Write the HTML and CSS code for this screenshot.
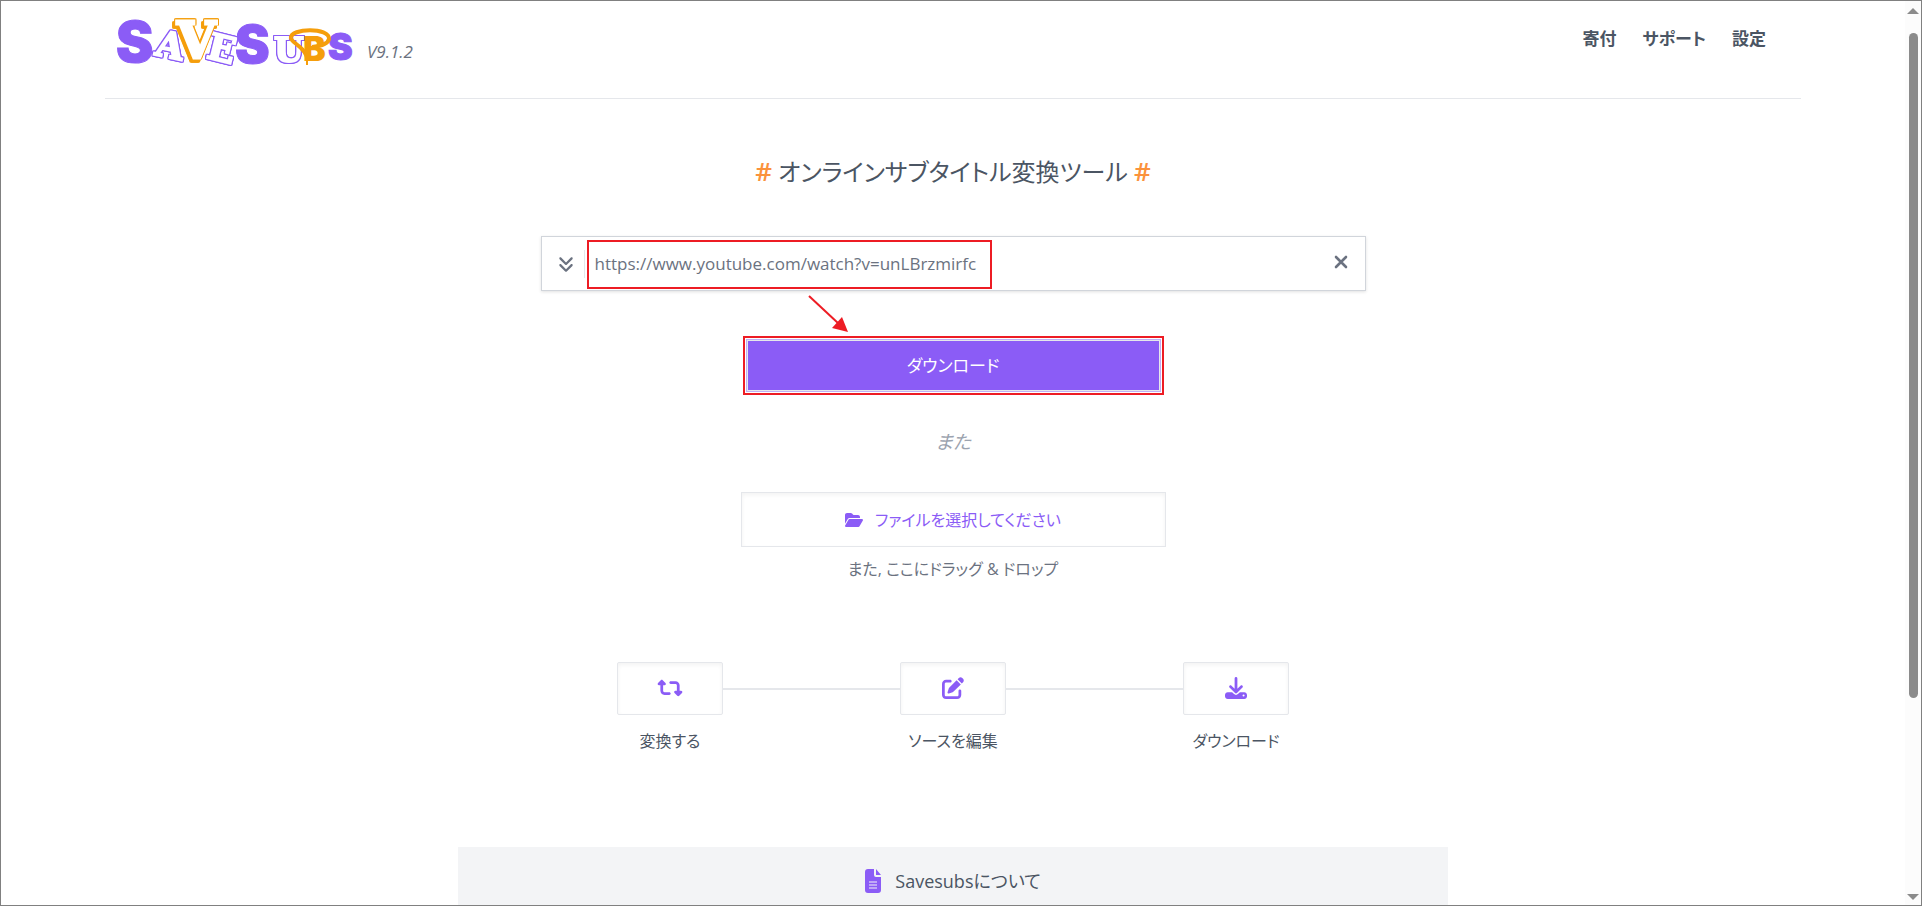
FILE: index.html
```
<!DOCTYPE html>
<html lang="ja">
<head>
<meta charset="utf-8">
<meta name="viewport" content="width=device-width, initial-scale=1">
<title>SaveSubs</title>
<link rel="stylesheet" href="styles.css">
</head>
<body>
<div class="page">
	<header class="header">
		<a href="#" class="logo" aria-label="SaveSubs">
			<svg width="240" height="80" viewBox="0 -16 240 80">
				<g class="logo-line">
					<text x="40" y="41" font-size="36" transform="rotate(12 55 30)">A</text>
					<text x="92" y="44" font-size="36" transform="rotate(14 105 32)">E</text>
					<text x="158" y="45" font-size="34">U</text>
				</g>
				<g class="logo-solid">
					<text x="0" y="45" font-size="56">S</text>
					<text x="119" y="46" font-size="52">S</text>
					<text x="212" y="43" font-size="37">S</text>
				</g>
				<g class="logo-v">
					<text x="61" y="41" font-size="50">V</text>
				</g>
				<g class="logo-b">
					<text x="187" y="44" font-size="34">B</text>
					<path class="logo-swash" d="M192 43C188 28 176 27 175 21C174 11 214 10 213 22C212 27 206 29 196 30"/>
					<path class="logo-stem" d="M191 20V48"/>
				</g>
			</svg>
		</a>
		<span class="version">V9.1.2</span>
		<nav class="nav">
			<a href="#">寄付</a>
			<a href="#">サポート</a>
			<a href="#">設定</a>
		</nav>
	</header>

	<main class="main">
		<h1 class="title"><b>#</b> オンラインサブタイトル変換ツール <b>#</b></h1>

		<form class="form">
			<div class="url-box">
				<button type="button" class="url-toggle" aria-label="サイト一覧">
					<svg width="16" height="18" viewBox="0 0 448 512"><path d="M246.600 470.600c-12.500 12.500-32.800 12.500-45.300 0l-160-160c-12.500-12.500-12.500-32.800 0-45.300s32.800-12.500 45.300 0L224 402.700 361.400 265.400c12.500-12.500 32.800-12.500 45.300 0s12.500 32.800 0 45.300l-160 160zm160-352l-160 160c-12.500 12.500-32.800 12.500-45.300 0l-160-160c-12.500-12.500-12.500-32.800 0-45.300s32.800-12.500 45.300 0L224 210.700 361.400 73.400c12.500-12.500 32.800-12.500 45.300 0s12.500 32.800 0 45.300z"/></svg>
				</button>
				<input type="text" class="url-input" aria-label="URL" value="https://www.youtube.com/watch?v=unLBrzmirfc">
				<button type="button" class="url-clear" aria-label="クリア">
					<svg width="14" height="14" viewBox="0 0 14 14"><path d="M2 2L12 12M12 2L2 12"/></svg>
				</button>
				<span class="mark"></span>
				<svg class="arrow" width="44" height="42" viewBox="0 0 44 42"><path class="arrow-line" d="M2 2L32 30"/><path d="M41 38L25 34L35 23Z"/></svg>
			</div>
			<button type="button" class="download">ダウンロード</button>
			<p class="or">また</p>
			<button type="button" class="choose">
				<svg width="18" height="16" viewBox="0 0 576 512"><path d="M88.700 223.800L0 375.800V96C0 60.700 28.700 32 64 32H181.500c17 0 33.300 6.700 45.300 18.700l26.500 26.500c12 12 28.300 18.700 45.300 18.700H416c35.300 0 64 28.700 64 64v32H144c-22.800 0-43.800 12.100-55.300 31.800zm27.600 16.100C122.100 230 132.600 224 144 224H544c11.500 0 22 6.100 27.700 16.100s5.700 22.200-.1 32.100l-112 192C453.900 474 443.400 480 432 480H32c-11.500 0-22-6.100-27.700-16.100s-5.700-22.200 .1-32.100l112-192z"/></svg>
				ファイルを選択してください
			</button>
			<p class="drop">また, ここにドラッグ &amp; ドロップ</p>
		</form>

		<ul class="steps">
			<li>
				<span class="step-icon"><svg width="25" height="22" viewBox="0 0 576 512"><path d="M272 416c17.700 0 32-14.300 32-32s-14.300-32-32-32H160c-17.700 0-32-14.300-32-32V192h32c12.900 0 24.600-7.800 29.600-19.800s2.200-25.700-6.900-34.900l-64-64c-12.500-12.500-32.800-12.500-45.300 0l-64 64c-9.200 9.200-11.900 22.900-6.900 34.900s16.600 19.800 29.600 19.800l32 0 0 128c0 53 43 96 96 96H272zM304 96c-17.700 0-32 14.300-32 32s14.300 32 32 32l112 0c17.700 0 32 14.300 32 32l0 128H416c-12.900 0-24.600 7.800-29.600 19.800s-2.200 25.700 6.900 34.900l64 64c12.500 12.500 32.800 12.500 45.300 0l64-64c9.200-9.200 11.900-22.900 6.900-34.900s-16.600-19.800-29.600-19.800l-32 0V192c0-53-43-96-96-96L304 96z"/></svg></span>
				変換する
			</li>
			<li>
				<span class="step-icon"><svg width="22" height="22" viewBox="0 0 512 512"><path d="M471.600 21.700c-21.900-21.900-57.300-21.900-79.200 0L362.300 51.700l97.900 97.900 30.100-30.100c21.900-21.900 21.900-57.300 0-79.200L471.600 21.700zm-299.200 220c-6.100 6.100-10.800 13.600-13.500 21.900l-29.600 88.800c-2.900 8.600-.6 18.100 5.800 24.600s15.900 8.700 24.600 5.800l88.800-29.600c8.200-2.700 15.700-7.400 21.900-13.500L437.700 172.300 339.700 74.300 172.400 241.700zM96 64C43 64 0 107 0 160V416c0 53 43 96 96 96H352c53 0 96-43 96-96V320c0-17.700-14.300-32-32-32s-32 14.300-32 32v96c0 17.700-14.300 32-32 32H96c-17.700 0-32-14.300-32-32V160c0-17.700 14.300-32 32-32h96c17.700 0 32-14.300 32-32s-14.300-32-32-32H96z"/></svg></span>
				ソースを編集
			</li>
			<li>
				<span class="step-icon"><svg width="22" height="22" viewBox="0 0 512 512"><path d="M288 32c0-17.700-14.300-32-32-32s-32 14.300-32 32V274.700l-73.400-73.400c-12.500-12.500-32.800-12.500-45.300 0s-12.500 32.800 0 45.300l128 128c12.500 12.500 32.800 12.500 45.300 0l128-128c12.500-12.500 12.500-32.800 0-45.300s-32.800-12.500-45.300 0L288 274.700V32zM64 352c-35.300 0-64 28.700-64 64v32c0 35.300 28.700 64 64 64H448c35.300 0 64-28.700 64-64V416c0-35.300-28.700-64-64-64H346.500l-45.300 45.300c-25 25-65.500 25-90.500 0L165.500 352H64zm368 56a24 24 0 1 1 0 48 24 24 0 1 1 0-48z"/></svg></span>
				ダウンロード
			</li>
		</ul>

		<section class="about">
			<h2>
				<svg width="16" height="24" viewBox="0 0 16 24"><path d="M3 0H9V6Q9 8 11 8H16V21Q16 24 13 24H3Q0 24 0 21V3Q0 0 3 0ZM11 0L16 6H11Z"/><path class="doc-lines" d="M4 13H12M4 16H12M4 19H12"/></svg>
				Savesubsについて
			</h2>
		</section>
	</main>
</div>

<div class="scrollbar">
	<svg width="12" height="6" viewBox="0 0 12 6"><path d="M0 6L6 0L12 6Z"/></svg>
	<div class="track"><div class="thumb"></div></div>
	<svg width="12" height="6" viewBox="0 0 12 6"><path d="M0 0L6 6L12 0Z"/></svg>
</div>
</body>
</html>
```
FILE: styles.css
```
* {
	box-sizing: border-box;
}

body {
	margin: 0;
	height: 100vh;
	display: flex;
	overflow: hidden;
	border: 1px solid #808080;
	background: #fff;
	color: #4b5563;
	font: 16px/24px "Open Sans", "Noto Sans CJK JP", sans-serif;
	font-feature-settings: "palt";
}

h1, h2, p, ul {
	margin: 0;
	padding: 0;
}

button, input {
	margin: 0;
	padding: 0;
	border: 0;
	background: none;
	color: inherit;
	font: inherit;
	font-feature-settings: inherit;
}

svg {
	display: block;
	fill: currentColor;
}

.page {
	flex: 1;
	height: 100%;
	overflow: hidden;
	padding: 0 104px;
}

/* header */
.header {
	display: flex;
	align-items: flex-start;
	height: 98px;
	padding: 0 35px 0 11px;
	border-bottom: 1px solid #e5e7eb;
}

.logo svg {
	overflow: visible;
}

.logo text {
	font-family: Inter, sans-serif;
	font-weight: 900;
}

.logo-solid {
	fill: #8b5cf6;
	stroke: #8b5cf6;
}

.logo .logo-line text,
.logo .logo-v text {
	font-family: "DejaVu Serif", serif;
	font-weight: bold;
}

.logo-line {
	fill: #fff;
	stroke: #fff;
	stroke-width: 2;
	filter: drop-shadow(1px 0 #8b5cf6) drop-shadow(-1px 0 #8b5cf6) drop-shadow(0 1px #8b5cf6) drop-shadow(0 -1px #8b5cf6);
}

.logo-v {
	fill: #fff;
	stroke: #fff;
	stroke-width: 3;
	filter: drop-shadow(1px 0 #f59e0b) drop-shadow(-1px 0 #f59e0b) drop-shadow(0 -1px #f59e0b) drop-shadow(-2px 3px #f59e0b);
}

.logo-b {
	fill: #f59e0b;
}

.logo-swash {
	fill: none;
	stroke: #f59e0b;
	stroke-width: 4;
}

.logo-stem {
	stroke: #f59e0b;
	stroke-width: 2;
}

.version {
	padding: 39px 0 0 11px;
	color: #6b7280;
	font-size: 17px;
	font-style: italic;
}

.nav {
	display: flex;
	gap: 26px;
	margin-left: auto;
	padding-top: 26px;
}

.nav a {
	color: #4b5563;
	font-size: 17px;
	font-weight: 600;
	text-decoration: none;
}

/* main */
.title {
	margin-top: 54px;
	color: #4b5563;
	font-size: 24px;
	font-weight: 400;
	line-height: 36px;
	text-align: center;
}

.title b {
	color: #fb923c;
	font-size: 26px;
	font-weight: 600;
}

.form {
	display: flex;
	flex-direction: column;
	align-items: center;
	margin-top: 46px;
}

.url-box {
	position: relative;
	display: flex;
	align-items: center;
	width: 100%;
	max-width: 825px;
	height: 55px;
	border: 1px solid #d1d5db;
	box-shadow: 0 1px 3px rgba(0, 0, 0, .12);
	color: #6b7280;
}

.url-toggle {
	display: flex;
	align-items: center;
	justify-content: center;
	width: 43px;
	height: 28px;
	padding-left: 6px;
	border-right: 1px solid #e5e7eb;
}

.url-input {
	flex: 1;
	min-width: 0;
	padding-left: 10px;
	outline: none;
	font-size: 17px;
}

.url-clear {
	padding: 0 17px 4px;
}

.url-clear path {
	fill: none;
	stroke: #6b7280;
	stroke-width: 2.6;
	stroke-linecap: round;
}

.mark {
	position: absolute;
	left: 45px;
	top: 3px;
	width: 405px;
	height: 49px;
	border: 2px solid #ed1c24;
	pointer-events: none;
}

.arrow {
	position: absolute;
	left: 265px;
	top: 57px;
	color: #ed1c24;
}

.arrow-line {
	stroke: #ed1c24;
	stroke-width: 2;
}

.download {
	width: 415px;
	max-width: 100%;
	height: 53px;
	margin-top: 48px;
	border: 1px solid #c0b0f5;
	background: #8b5cf6;
	box-shadow: inset 0 0 0 1px #e5e7eb;
	outline: 2px solid #ed1c24;
	outline-offset: 1px;
	color: #fff;
	font-size: 17px;
}

.or {
	margin-top: 38px;
	color: #9ca3af;
	font-size: 19px;
	font-style: italic;
}

.choose {
	display: flex;
	align-items: center;
	justify-content: center;
	gap: 12px;
	width: 425px;
	max-width: 100%;
	height: 55px;
	margin-top: 38px;
	border: 1px solid #e5e7eb;
	box-shadow: inset 0 2px 4px rgba(0, 0, 0, .05);
	color: #8b5cf6;
}

.drop {
	margin-top: 10px;
	color: #6b7280;
}

.steps {
	display: grid;
	grid-template-columns: repeat(3, 1fr);
	width: 849px;
	max-width: 100%;
	margin: 81px auto 0;
	list-style: none;
}

.steps li {
	display: flex;
	flex-direction: column;
	align-items: center;
	gap: 14px;
	white-space: nowrap;
}

.step-icon {
	display: flex;
	align-items: center;
	align-self: stretch;
	color: #8b5cf6;
}

.step-icon svg {
	box-sizing: content-box;
	width: 104px;
	padding: 14px 0 15px;
	border: 1px solid #e5e7eb;
	border-radius: 2px;
	box-shadow: inset 0 2px 4px rgba(0, 0, 0, .05);
}

.step-icon::before,
.step-icon::after {
	content: "";
	flex: 1;
	height: 2px;
	background: #e5e7eb;
}

.steps li:first-child .step-icon::before,
.steps li:last-child .step-icon::after {
	background: none;
}

.about {
	max-width: 990px;
	min-height: 120px;
	margin: 94px auto 0;
	padding-top: 22px;
	background: #f3f4f6;
}

.about h2 {
	display: flex;
	justify-content: center;
	gap: 14px;
	font-size: 18px;
	font-weight: 400;
}

.about svg {
	color: #8b5cf6;
}

.doc-lines {
	stroke: #f3f4f6;
}

/* scrollbar */
.scrollbar {
	display: flex;
	flex-direction: column;
	align-items: center;
	width: 16px;
	height: 100%;
	padding: 7px 0 5px;
	background: #fcfcfc;
	color: #8b8b8b;
}

.track {
	flex: 1;
	padding: 19px 0;
}

.thumb {
	width: 9px;
	height: 79%;
	border-radius: 5px;
	background: #8b8b8b;
}
```
